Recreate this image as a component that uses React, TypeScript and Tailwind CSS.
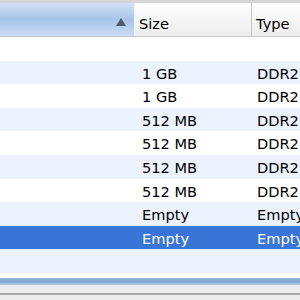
const rows = [
  { size: '', type: '' },
  { size: '1 GB', type: 'DDR2 SDRAM' },
  { size: '1 GB', type: 'DDR2 SDRAM' },
  { size: '512 MB', type: 'DDR2 SDRAM' },
  { size: '512 MB', type: 'DDR2 SDRAM' },
  { size: '512 MB', type: 'DDR2 SDRAM' },
  { size: '512 MB', type: 'DDR2 SDRAM' },
  { size: 'Empty', type: 'Empty' },
  { size: 'Empty', type: 'Empty', selected: true },
  { size: '', type: '' },
];

export default function App() {
  return (
    <div
      className="w-[300px] h-[300px] overflow-hidden bg-white text-[14.6px] text-black"
      style={{ fontFamily: '"DejaVu Sans", "Liberation Sans", sans-serif' }}
    >
      {/* column headers */}
      <div className="h-[3px] bg-[#d6d6d6]" />
      <div className="grid grid-cols-[135px_117px_1fr] h-[34px] border-b border-[#c8c8c8]">
        <div className="flex items-center justify-end pr-[7px] pt-[4px] bg-gradient-to-b from-[#d3e2f5] via-[#a7c4e9] to-[#cadcf3] border-r border-[#eef4fb]">
          <svg width="12" height="10" viewBox="0 0 12 10">
            <polygon points="6,1 11,9 1,9" fill="#4b5a6b" />
          </svg>
        </div>
        <div className="flex items-center pl-[4px] pt-[8px] bg-gradient-to-b from-white to-[#ededed] border-r border-[#c4c4c4]">
          Size
        </div>
        <div className="flex items-center pl-[4px] pt-[8px] bg-gradient-to-b from-white to-[#ededed] whitespace-nowrap">
          Type
        </div>
      </div>

      {/* rows */}
      {rows.map((r, i) => (
        <div
          key={i}
          className={
            'grid grid-cols-[135px_117px_1fr] h-[23.6px] pt-[2px] items-center whitespace-nowrap ' +
            (r.selected ? 'bg-[#3875d7] text-white' : i % 2 === 1 ? 'bg-[#edf3fe]' : 'bg-white')
          }
        >
          <div />
          <div className="pl-[7px]">{r.size}</div>
          <div className="pl-[5px] overflow-hidden">{r.type}</div>
        </div>
      ))}

      {/* bottom edge */}
      <div className="h-[5px] bg-white" />
      <div className="h-[7px] bg-gradient-to-b from-[#9fb9dc] via-[#7ea3d3] to-[#b5cbe8]" />
      <div className="h-[8px] bg-[#ececec]" />
      <div className="h-[2px] bg-[#a8a8a8]" />
      <div className="h-[10px] bg-[#ececec]" />
    </div>
  );
}
